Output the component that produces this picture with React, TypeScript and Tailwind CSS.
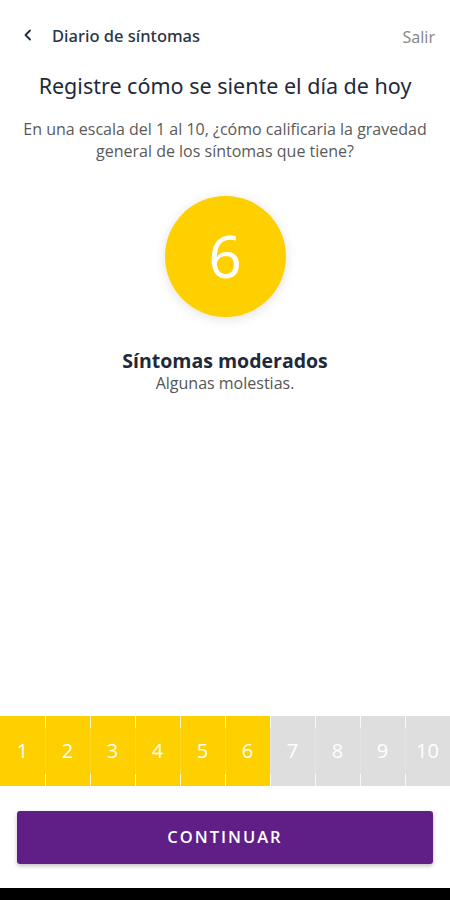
import React from "react";

export default function App() {
  const nums = [1, 2, 3, 4, 5, 6, 7, 8, 9, 10];
  const value = 6;
  return (
    <div className="h-[900px] w-[450px] bg-white flex flex-col overflow-hidden" style={{ fontFamily: '"Open Sans", sans-serif' }}>
      <div className="h-[74px] flex items-center px-[20px] pb-[1px]">
        <svg width="14" height="14" viewBox="0 0 14 14" className="ml-[1px] mb-[4px]">
          <path d="M9 2.5 L4.5 7 L9 11.5" fill="none" stroke="#1f2a3a" strokeWidth="1.8" strokeLinecap="round" strokeLinejoin="round" />
        </svg>
        <div className="ml-[17px] text-[16.5px] text-[#2a3445]" style={{ fontFamily: '"Noto Sans", sans-serif', fontWeight: 500 }}>Diario de síntomas</div>
        <div className="ml-auto text-[16px] text-[#8a8a8a] mr-[-5px]" style={{ fontFamily: '"Noto Sans", sans-serif' }}>Salir</div>
      </div>
      <div className="text-center text-[21.5px] text-[#1e2a3a] leading-[24px]" style={{ fontFamily: '"Noto Sans", sans-serif' }}>Registre cómo se siente el día de hoy</div>
      <div className="mt-[20px] text-center text-[16px] leading-[22px] text-[#5a5a5a] px-[16px]">
        En una escala del 1 al 10, ¿cómo calificaria la gravedad general de los síntomas que tiene?
      </div>
      <div className="mt-[34px] flex justify-center">
        <div className="w-[121px] h-[121px] rounded-full bg-[#FFD000] flex items-center justify-center shadow-[0_2px_12px_rgba(0,0,0,0.12)]">
          <span className="text-white text-[58px] leading-none mb-[2px]" style={{ fontFamily: '"Noto Sans", sans-serif' }}>{value}</span>
        </div>
      </div>
      <div className="mt-[32px] text-center text-[19.5px] font-bold text-[#1e2a3a] leading-[24px]">Síntomas moderados</div>
      <div className="text-center text-[16px] text-[#555] leading-[20px]">Algunas molestias.</div>
      <div className="flex-1" />
      <div className="h-[70px] flex">
        {nums.map((n, i) => {
          const active = n <= value;
          return (
            <div
              key={n}
              className={`relative flex-1 flex items-center justify-center ${active ? "bg-[#FFD000]" : "bg-[#DEDEDE]"}`}
            >
              {i > 0 && (
                <>
                  <div className="absolute left-0 top-0 bottom-0 w-px bg-white/15" />
                  <div className="absolute left-0 top-0 h-[12px] w-px bg-white/80" />
                  <div className="absolute left-0 bottom-0 h-[12px] w-px bg-white/80" />
                </>
              )}
              <span className="text-white text-[20px] font-medium">{n}</span>
            </div>
          );
        })}
      </div>
      <div className="h-[114px] flex flex-col">
        <div className="px-[17px] pt-[25px]">
          <div className="h-[53px] rounded-[3px] bg-[#5F1F87] flex items-center justify-center shadow-[0_2px_4px_rgba(0,0,0,0.25)]">
            <span className="text-white text-[16.5px] tracking-[2px] font-semibold">CONTINUAR</span>
          </div>
        </div>
        <div className="flex-1" />
        <div className="h-[12px] bg-black" />
      </div>
    </div>
  );
}
